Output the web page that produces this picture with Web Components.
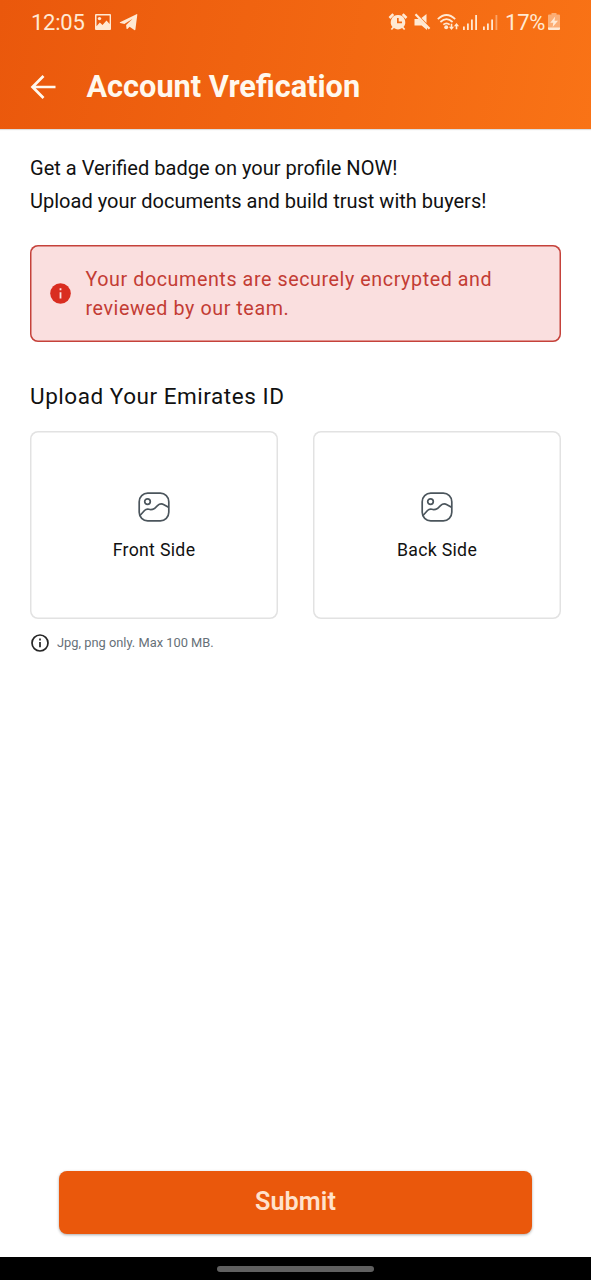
<!DOCTYPE html>
<html lang="en">
<head>
<meta charset="utf-8">
<title>Account Vrefication</title>
<style>
html,body{margin:0;height:100%;background:#fff}
body{font-family:Roboto,"Liberation Sans",sans-serif;color:#111}
</style>
</head>
<body>
<verification-screen></verification-screen>
<script>
const define = (name, html) => customElements.define(name, class extends HTMLElement {
  constructor() {
    super();
    this.attachShadow({mode: 'open'}).innerHTML = html;
  }
});

define('status-bar', `<style>
:host{display:flex;justify-content:space-between;height:44px;padding:0 31px 0 31px;color:#ffe9d3;font-size:22px;line-height:46px;box-sizing:border-box}
div{display:flex;align-items:center}
svg{display:block;flex:none}
.time{width:54px;letter-spacing:-.25px;margin-right:8.500px;padding-top:1px}
.pct{width:40px;margin:0 2px 0 7px;letter-spacing:-.2px;padding-top:1px}
</style>
<div><span class="time">12:05</span>
<svg width="18" height="18" viewBox="0 0 18 18"><path fill="currentColor" fill-rule="evenodd" d="M2 1h14a1 1 0 0 1 1 1v14a1 1 0 0 1-1 1H2a1 1 0 0 1-1-1V2a1 1 0 0 1 1-1Zm.5 1.500v10.800l3.300-3.900 2.700 2.700 4-4.600 3.100 3.600V2.500Z"/><circle cx="5.500" cy="5.600" r="1.700" fill="currentColor"/></svg>
<svg style="margin-left:7px" width="20" height="18" viewBox="0 0 20 18"><path fill="currentColor" d="M1 9.300 17.500 1.200q.9-.3.800.5L16.400 16.500q-.2 1-1.100.5l-4.700-3.300-2.200 2.200q-.7.500-.9-.4l-.4-3.500 6.600-6.300-8.300 5.200L1.100 10q-.7-.3-.1-.7Z"/></svg></div>
<div>
<svg width="20" height="20" viewBox="0 0 20 20"><path fill="currentColor" fill-rule="evenodd" d="M10 3a7.200 7.200 0 0 1 5.500 11.900l1.800 2.100-1.300 1-1.900-2a7.200 7.200 0 0 1-8.200 0l-1.900 2-1.300-1 1.800-2.100A7.200 7.200 0 0 1 10 3Zm-1 3v5.200h5V9.600h-3.300V6Z"/><path d="m1.500 6 3.800-3.800M18.500 6l-3.800-3.800" stroke="currentColor" stroke-width="2.600"/></svg>
<svg style="margin-left:5px" width="20" height="20" viewBox="0 0 20 20"><path fill="currentColor" d="M1.500 7h4.300L14 15.200V18l-5.400-4.600H1.500ZM8.500 6.100 13.500 2v9.100Z"/><path d="m2.500 2.300 14 14.500" stroke="currentColor" stroke-width="2.300"/></svg>
<svg style="margin-left:4px" width="23" height="20" viewBox="0 0 23 20"><g fill="none" stroke="currentColor" stroke-width="1.700"><path d="M.8 7.200q8.700-8.400 17.400 0M3.400 10q6.100-5.600 12.200 0M6.300 12.700q3.200-2.800 6.400 0"/></g><circle cx="9.200" cy="15.200" r="2" fill="currentColor"/><path fill="currentColor" d="M13.700 11.700h1.600v3h1.800l-2.600 3.300-2.600-3.300h1.800ZM18.700 17.300h1.600v-3h1.800l-2.600-3.300-2.600 3.300h1.800Z"/></svg>
<svg style="margin-left:2px" width="17" height="18" viewBox="0 0 17 18"><path fill="currentColor" d="M1 13.500h1.800V17H1ZM5 10.500h1.800V17H5ZM9 6.500h1.800V17H9ZM13.200 2H15v15h-1.800Z"/></svg>
<svg style="margin-left:4px" width="17" height="18" viewBox="0 0 17 18"><path fill="currentColor" d="M0 13.500h1.800V17H0ZM4 10.500h1.800V17H4ZM8.200 6.500H10V17H8.200Z"/><path fill="currentColor" opacity=".45" d="M12.500 2h1.800v15h-1.800Z"/></svg>
<span class="pct" style="margin-left:5px;margin-right:3px">17%</span>
<svg width="12" height="18" viewBox="0 0 12 18"><path fill="currentColor" opacity=".5" d="M3.500 0h5v1.600H11q1 0 1 1V15H0V2.600q0-1 1-1h2.500Z"/><path fill="currentColor" d="M0 14.500h12V16q0 1-1 1H1q-1 0-1-1ZM7.200 3.500 2.200 9.800h3.100L4.700 14l5.300-6.200H6.500Z"/></svg></div>`);

define('app-header', `<style>
:host{display:block;height:129px;background:linear-gradient(102.300deg,#ea580c,#f97316);box-shadow:0 1px 1px #0002}
.row{display:flex;align-items:center;height:86px;padding-left:30px;color:#fff8ee}
h1{margin:0 0 0 29.500px;font-size:30.700px;font-weight:700;line-height:36px;white-space:nowrap}
</style>
<status-bar></status-bar>
<div class="row"><svg width="27" height="26" viewBox="0 0 27 26"><path d="M13.500 2 2.500 13l11 11M2.500 13H25.500" fill="none" stroke="currentColor" stroke-width="2.700"/></svg><h1><slot></slot></h1></div>`);

define('secure-notice', `<style>
:host{display:flex;align-items:center;box-sizing:border-box;height:97px;box-shadow:inset 0 0 0 1.500px #c5423b;border-radius:8px;background:#fadfdf;color:#c33c34;padding:1px 0 0 20.500px;font-size:19.700px;line-height:29.500px;letter-spacing:.580px}
svg{flex:none;margin:-2px 14.500px 0 -.5px}
</style>
<svg width="21" height="21" viewBox="0 0 21 21"><circle cx="10.500" cy="10.500" r="10.300" fill="#d92d20"/><path d="M10.500 9.300v6.200M10.500 5.300v2" stroke="#fadfdf" stroke-width="1.800"/></svg><div><slot></slot></div>`);

define('upload-card', `<style>
:host{display:flex;flex-direction:column;align-items:center;box-sizing:border-box;height:188px;box-shadow:inset 0 0 0 1.500px #e2e2e2;border-radius:8px;padding-top:60.500px;font-size:17.700px;line-height:24px;letter-spacing:.310px}
svg{margin-bottom:16px;flex:none}
</style>
<svg width="32" height="30" viewBox="0 0 32 30"><g fill="none" stroke="#4b555c" stroke-width="1.700"><rect x="1.200" y="1.200" width="29.600" height="27.600" rx="8.500"/><circle cx="9.500" cy="9.600" r="2.800"/><path d="M2 23.500 6.500 18.500Q8.500 16.500 11 17.300T16.500 16.500L19.500 13.600Q22.500 10.800 26 12.700L30.500 15.300"/></g></svg><slot></slot>`);

define('file-hint', `<style>
:host{display:flex;align-items:center;height:20px;font-size:12.850px;line-height:18px;color:#667078;gap:7px}
</style>
<svg width="20" height="20" viewBox="0 0 20 20"><circle cx="10" cy="10" r="8" fill="none" stroke="#252525" stroke-width="1.700"/><path d="M10 9v5.200M10 5.600v1.900" stroke="#252525" stroke-width="1.700"/></svg><span><slot></slot></span>`);

define('submit-button', `<style>
:host{display:block}
button{display:block;width:100%;height:63px;padding:0;border:0;border-radius:8px;background:#ea580c;color:#ffe2cc;font:600 25.200px/62px Roboto,sans-serif;letter-spacing:.080px;padding-bottom:1px;box-shadow:0 1px 3px #0005}
</style><button><slot></slot></button>`);

define('verification-screen', `<style>
:host{display:flex;flex-direction:column;height:1280px;width:591px;overflow:hidden}
main{flex:1;padding:23px 30px 0}
p{margin:0;font-size:20.050px;line-height:33px;white-space:nowrap;color:#111}
secure-notice{margin-top:27px}
h2{margin:38px 0 0;font-size:22.500px;font-weight:400;line-height:32px;letter-spacing:.540px}
.cards{display:grid;grid-template-columns:1fr 1fr;gap:35px;margin-top:19px}
file-hint{margin-top:13.500px}
submit-button{margin:0 59px 23px}
.nav{height:23px;background:#000;display:flex;align-items:center;justify-content:center}
.nav i{width:157px;height:6px;border-radius:3px;background:#606060}
</style>
<app-header>Account Vrefication</app-header>
<main><p>Get a Verified badge on your profile NOW!<br>Upload your documents and build trust with buyers!</p>
<secure-notice>Your documents are securely encrypted and<br>reviewed by our team.</secure-notice>
<h2>Upload Your Emirates ID</h2>
<div class="cards"><upload-card>Front Side</upload-card><upload-card>Back Side</upload-card></div>
<file-hint>Jpg, png only. Max 100 MB.</file-hint></main>
<submit-button>Submit</submit-button>
<div class="nav"><i></i></div>`);
</script>
</body>
</html>
